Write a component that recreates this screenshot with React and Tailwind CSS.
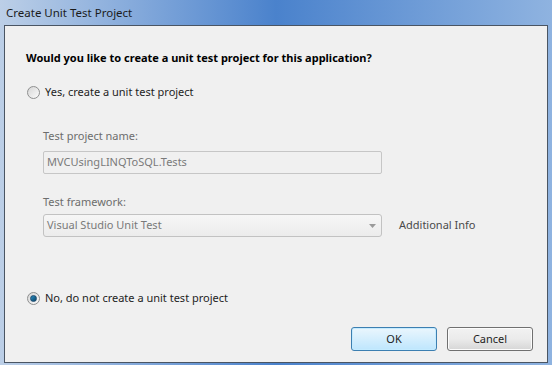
import React from "react";

function Radio({ checked }) {
  return (
    <span className="relative inline-flex h-[13px] w-[13px] items-center justify-center rounded-full border border-[#8e8f8f] bg-gradient-to-br from-[#d6d6d6] to-[#fbfbfb]">
      {checked && (
        <span className="h-[7px] w-[7px] rounded-full border border-[#1c4a6e] bg-gradient-to-br from-[#2a8fc4] to-[#0c4568]" />
      )}
    </span>
  );
}

export default function App() {
  return (
    <div
      className="relative h-[365px] w-[552px] overflow-hidden bg-gradient-to-r from-[#bccfe7] via-[#4a82cc] to-[#8fb3e0] text-[11px] text-black"
      style={{ fontFamily: '"Noto Sans", "Open Sans", Arial, sans-serif' }}
    >
      {/* title bar */}
      <div className="flex h-[25px] items-center pl-[6px] text-[11.5px] text-[#1b1b1b]">
        Create Unit Test Project
      </div>

      {/* client area */}
      <div className="mx-[4px] flex h-[338px] w-[544px] flex-col border border-[#4a5563] bg-[#f0f0f0]">
        <div className="pl-[21px] pt-[23px] text-[11px] font-bold leading-[18px]">
          Would you like to create a unit test project for this application?
        </div>

        <div className="mt-[16px] flex items-center gap-[5px] pl-[22px] leading-[18px]">
          <Radio />
          <span className="text-[#1e1e1e]">Yes, create a unit test project</span>
        </div>

        <div className="mt-[26px] pl-[38px] text-[#6d6d6d] leading-[18px]">Test project name:</div>
        <div className="ml-[38px] mt-[6px] flex h-[23px] w-[339px] items-center rounded-[2px] border border-[#c6c6c6] bg-[#f0f0f0] pl-[3px] text-[#7a7a7a]">
          MVCUsingLINQToSQL.Tests
        </div>

        <div className="mt-[19px] pl-[38px] text-[#6d6d6d] leading-[18px]">Test framework:</div>
        <div className="mt-[3px] flex items-center">
          <div className="ml-[38px] flex h-[23px] w-[339px] items-center justify-between rounded-[3px] border border-[#c2c2c2] bg-gradient-to-b from-[#f6f6f6] to-[#ececec] pl-[3px] pr-[5px] text-[#7a7a7a]">
            <span>Visual Studio Unit Test</span>
            <svg width="7" height="4" viewBox="0 0 7 4">
              <path d="M0 0h7L3.5 4z" fill="#9a9a9a" />
            </svg>
          </div>
          <span className="ml-[17px] text-[#4a4a4a]">Additional Info</span>
        </div>

        <div className="mt-[52px] flex items-center gap-[5px] pl-[22px] leading-[18px]">
          <Radio checked />
          <span className="text-[#1e1e1e]">No, do not create a unit test project</span>
        </div>

        <div className="mt-[20px] flex justify-end gap-[10px] pr-[14px]">
          <button className="flex h-[24px] w-[86px] items-center justify-center rounded-[3px] border border-[#3c7fb1] bg-gradient-to-b from-[#eaf6fd] to-[#bee6fd] shadow-[inset_0_0_0_1px_#c4ebff] text-[11px] text-[#1e1e1e]">
            OK
          </button>
          <button className="flex h-[24px] w-[86px] items-center justify-center rounded-[3px] border border-[#707070] bg-gradient-to-b from-[#f2f2f2] via-[#ebebeb] to-[#d6d6d6] shadow-[inset_0_0_0_1px_#fcfcfc] text-[11px] text-[#1e1e1e]">
            Cancel
          </button>
        </div>
      </div>
    </div>
  );
}
